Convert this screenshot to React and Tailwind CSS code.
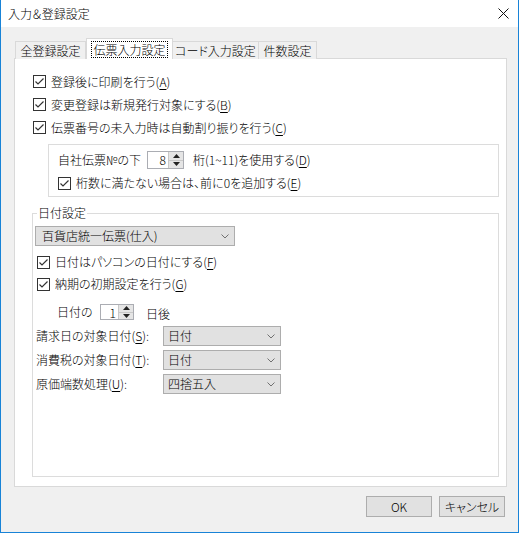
import React from "react";

const Check = () => (
  <span className="w-[13px] h-[13px] border border-[#333333] bg-white flex items-center justify-center shrink-0">
    <svg width="11" height="11" viewBox="0 0 11 11">
      <path d="M1.5 5.5 L4 8 L9.5 2.5" fill="none" stroke="#333333" strokeWidth="1.2" />
    </svg>
  </span>
);

const U = ({ c }) => <span className="underline underline-offset-2">{c}</span>;

const CheckRow = ({ children, cls }) => (
  <div className={`flex items-center gap-[5px] ${cls}`}>
    <Check />
    <span>{children}</span>
  </div>
);

const Spin = ({ value, cls }) => (
  <div className={`flex border border-[#abadb3] bg-white ${cls}`}>
    <div className="flex-1 text-right pr-[2px] leading-[15px]">{value}</div>
    <div className="w-[15px] flex flex-col border-l border-[#c8c8c8]">
      <div className="flex-1 bg-[#e5e5e5] border-b border-[#c8c8c8] flex items-center justify-center">
        <svg width="7" height="4" viewBox="0 0 7 4"><path d="M0 4 L3.5 0 L7 4 Z" fill="#222" /></svg>
      </div>
      <div className="flex-1 bg-[#e5e5e5] flex items-center justify-center">
        <svg width="7" height="4" viewBox="0 0 7 4"><path d="M0 0 L3.5 4 L7 0 Z" fill="#222" /></svg>
      </div>
    </div>
  </div>
);

const Select = ({ text, cls }) => (
  <div className={`flex items-center justify-between h-[20px] border border-[#adadad] bg-[#e1e1e1] pr-[5px] ${cls}`}>
    <span>{text}</span>
    <svg width="8" height="5" viewBox="0 0 8 5">
      <path d="M0.5 0.5 L4 4 L7.5 0.5" stroke="#707070" fill="none" />
    </svg>
  </div>
);

export default function App() {
  return (
    <div
      className="w-[519px] h-[533px] flex flex-col bg-[#f0f0f0] border-l border-r border-b border-[#1883d7] text-[12px] leading-[16px] text-black font-light [font-feature-settings:'palt']"
      style={{ fontFamily: '"Noto Sans CJK JP", "Noto Sans", sans-serif' }}
    >
      {/* Title bar */}
      <div className="h-[27px] bg-white flex items-center justify-between pl-[7px] pr-[9px] shrink-0">
        <span>入力＆登録設定</span>
        <svg width="11" height="11" viewBox="0 0 11 11">
          <path d="M0.5 0.5 L10.5 10.5 M10.5 0.5 L0.5 10.5" stroke="#111" strokeWidth="1" />
        </svg>
      </div>

      {/* Body */}
      <div className="flex-1 flex flex-col pl-[13px] pr-[11px] pt-[12px]">
        {/* Tabs */}
        <div className="flex items-end h-[20px] relative z-10 -mb-px">
          <div className="w-[71px] h-[18px] ml-px border border-b-0 border-[#d9d9d9] bg-[#f0f0f0] flex items-center justify-center">
            全登録設定
          </div>
          <div className="w-[87px] h-[21px] border border-b-0 border-[#d9d9d9] bg-white flex items-center justify-center">
            <span className="border border-dotted border-black px-[1px] h-[17px] leading-[15px]">伝票入力設定</span>
          </div>
          <div className="w-[86px] h-[18px] border border-b-0 border-l-0 border-[#d9d9d9] bg-[#f0f0f0] flex items-center justify-center">
            コード入力設定
          </div>
          <div className="w-[58px] h-[18px] border border-b-0 border-l-0 border-[#d9d9d9] bg-[#f0f0f0] flex items-center justify-center">
            件数設定
          </div>
        </div>

        {/* Panel */}
        <div className="h-[429px] border border-[#d9d9d9] bg-white flex flex-col pl-[18px] pr-[7px] pt-[11px] pb-[9px]">
          <CheckRow cls="h-[23px]">登録後に印刷を行う(<U c="A" />)</CheckRow>
          <CheckRow cls="h-[23px]">変更登録は新規発行対象にする(<U c="B" />)</CheckRow>
          <CheckRow cls="h-[23px]">伝票番号の未入力時は自動割り振りを行う(<U c="C" />)</CheckRow>

          {/* Inner box */}
          <div className="mt-[5px] ml-[15px] border border-[#dcdcdc] pl-[9px] pt-[6px] pb-[5px] flex flex-col">
            <div className="flex items-center h-[18px]">
              <span className="w-[89px]">自社伝票№の下</span>
              <Spin value="8" cls="w-[37px] h-[18px]" />
              <span className="ml-[9px]">桁(1~11)を使用する(<U c="D" />)</span>
            </div>
            <CheckRow cls="h-[16px] mt-[6px]">桁数に満たない場合は、前に0を追加する(<U c="E" />)</CheckRow>
          </div>

          {/* Group box */}
          <fieldset className="flex-1 -ml-px mt-[8px] border border-[#dcdcdc] pl-[2px] flex flex-col min-h-0">
            <legend className="ml-[2px] px-[1px] leading-[16px]">日付設定</legend>
            <Select text="百貨店統一伝票(仕入)" cls="w-[200px] mt-[5px] pl-[6px]" />
            <CheckRow cls="h-[22px] mt-[5px] ml-[2px]">日付はパソコンの日付にする(<U c="F" />)</CheckRow>
            <CheckRow cls="h-[22px] ml-[2px]">納期の初期設定を行う(<U c="G" />)</CheckRow>
            <div className="flex items-center h-[18px] mt-[8px] ml-[22px]">
              <span className="w-[43px]">日付の</span>
              <Spin value="1" cls="w-[34px] h-[16px]" />
              <span className="ml-[12px] mt-[3px]">日後</span>
            </div>
            <div className="flex items-center h-[20px] mt-[5px] ml-[1px]">
              <span className="w-[127px]">請求日の対象日付(<U c="S" />):</span>
              <Select text="日付" cls="w-[118px] pl-[4px]" />
            </div>
            <div className="flex items-center h-[20px] mt-[4px] ml-[1px]">
              <span className="w-[127px]">消費税の対象日付(<U c="T" />):</span>
              <Select text="日付" cls="w-[118px] pl-[4px]" />
            </div>
            <div className="flex items-center h-[20px] mt-[4px] ml-[1px]">
              <span className="w-[127px]">原価端数処理(<U c="U" />):</span>
              <Select text="四捨五入" cls="w-[118px] pl-[4px]" />
            </div>
          </fieldset>
        </div>

        {/* Buttons */}
        <div className="flex justify-end gap-[7px] mt-[9px] mr-[2px]">
          <div className="w-[66px] h-[21px] border border-[#adadad] bg-[#e1e1e1] flex items-center justify-center">OK</div>
          <div className="w-[66px] h-[21px] border border-[#adadad] bg-[#e1e1e1] flex items-center justify-center">キャンセル</div>
        </div>
      </div>
    </div>
  );
}
